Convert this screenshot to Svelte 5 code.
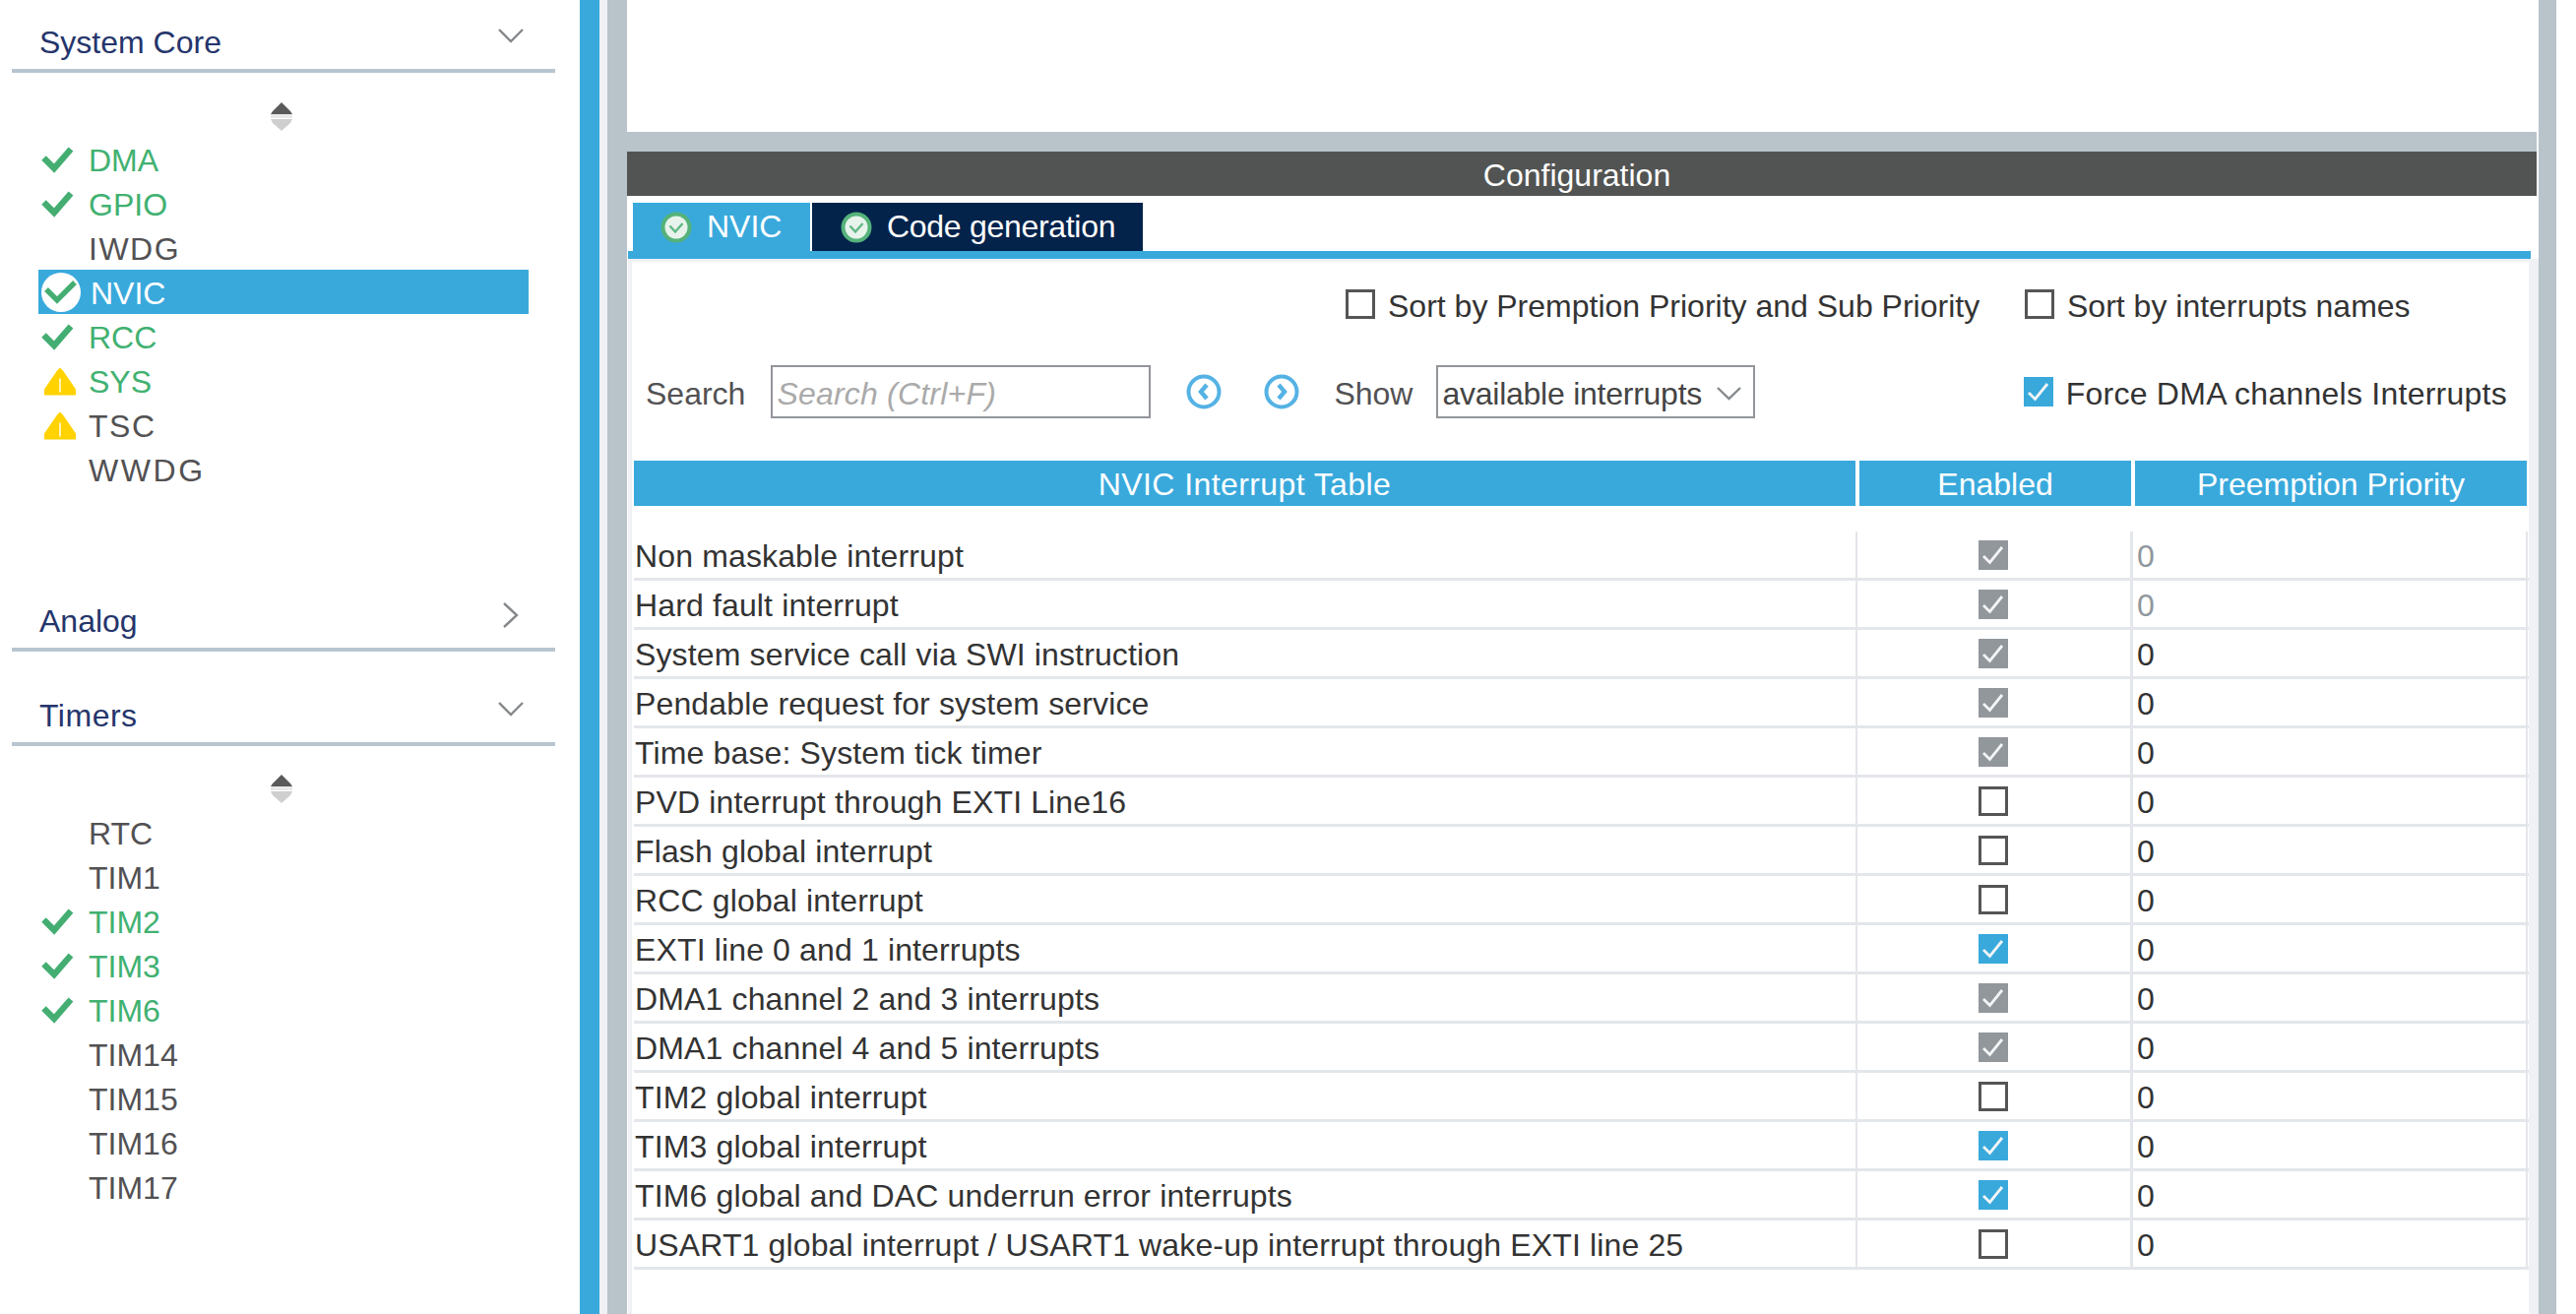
<script>
	const systemCore = [
		{ name: 'DMA', icon: 'check', green: true },
		{ name: 'GPIO', icon: 'check', green: true },
		{ name: 'IWDG', track: 'wide' },
		{ name: 'NVIC', icon: 'active', selected: true },
		{ name: 'RCC', icon: 'check', green: true },
		{ name: 'SYS', icon: 'warn', green: true },
		{ name: 'TSC', icon: 'warn', track: 'wide' },
		{ name: 'WWDG', track: 'wider' }
	];
	const timers = [
		{ name: 'RTC' },
		{ name: 'TIM1' },
		{ name: 'TIM2', icon: 'check', green: true },
		{ name: 'TIM3', icon: 'check', green: true },
		{ name: 'TIM6', icon: 'check', green: true },
		{ name: 'TIM14' },
		{ name: 'TIM15' },
		{ name: 'TIM16' },
		{ name: 'TIM17' }
	];
	// state: off | on | locked
	const interrupts = [
		{ name: 'Non maskable interrupt', state: 'locked', dim: true },
		{ name: 'Hard fault interrupt', state: 'locked', dim: true },
		{ name: 'System service call via SWI instruction', state: 'locked' },
		{ name: 'Pendable request for system service', state: 'locked' },
		{ name: 'Time base: System tick timer', state: 'locked' },
		{ name: 'PVD interrupt through EXTI Line16', state: 'off' },
		{ name: 'Flash global interrupt', state: 'off' },
		{ name: 'RCC global interrupt', state: 'off' },
		{ name: 'EXTI line 0 and 1 interrupts', state: 'on' },
		{ name: 'DMA1 channel 2 and 3 interrupts', state: 'locked' },
		{ name: 'DMA1 channel 4 and 5 interrupts', state: 'locked' },
		{ name: 'TIM2 global interrupt', state: 'off' },
		{ name: 'TIM3 global interrupt', state: 'on' },
		{ name: 'TIM6 global and DAC underrun error interrupts', state: 'on' },
		{ name: 'USART1 global interrupt / USART1 wake-up interrupt through EXTI line 25', state: 'off' }
	];
</script>

{#snippet scroller()}
	<svg class="scroller" width="22" height="29" viewBox="0 0 22 29">
		<path d="M11 0 L20 9 L22 12 L0 12 L2 9 Z" fill="#5a5a5a" />
		<rect x="0" y="12" width="22" height="4" fill="#e9e9e9" />
		<path d="M0 17 L22 17 L20 21 L11 29 L2 21 Z" fill="#cfcfcf" />
	</svg>
{/snippet}

{#snippet box(state)}
	<span class="box {state}">
		{#if state !== 'off'}
			<svg width="30" height="30" viewBox="0 0 30 30">
				<path d="M5 16 L11.5 22.5 L24 7" fill="none" stroke="#f4f5f6" stroke-width="2.8" />
			</svg>
		{/if}
	</span>
{/snippet}

{#snippet navList(items)}
	<ul class="nav-list">
		{#each items as item}
			<li class="nav-row {item.track ?? ''}" class:green={item.green} class:selected={item.selected}>
				<span class="slot">
					{#if item.icon === 'check'}
						<svg width="34" height="28" viewBox="0 0 34 28">
							<path d="M3.5 12.5 L14 23 L31 3.5" fill="none" stroke="#44ae72" stroke-width="6.4" />
						</svg>
					{:else if item.icon === 'active'}
						<svg width="44" height="44" viewBox="0 0 44 44">
							<circle cx="22" cy="22" r="20" fill="#fff" />
							<path d="M7 19 L18 30 L36 12" fill="none" stroke="#44ae72" stroke-width="5.4" />
						</svg>
					{:else if item.icon === 'warn'}
						<svg width="36" height="31" viewBox="-3 -1.5 36 31">
							<path d="M17 1 L20 4 L33 23 L33 29 L1 29 L1 23 L14 4 Z" fill="#ffd200" />
							<rect x="16" y="12" width="2" height="14" fill="#fff3b8" />
						</svg>
					{/if}
				</span>
				<span class="nav-name">{item.name}</span>
			</li>
		{/each}
	</ul>
{/snippet}

{#snippet tabIcon()}
	<svg width="32" height="32" viewBox="0 0 32 32">
		<circle cx="16" cy="16" r="13.5" fill="#e8f3ec" stroke="#55b27a" stroke-width="4" />
		<path d="M9.5 14.5 L15 20.5 L22.5 12" fill="none" stroke="#62b885" stroke-width="2.4" />
	</svg>
{/snippet}

<div class="page">
	<aside class="sidebar">
		<section class="group first">
			<header class="group-head">
				<span>System Core</span>
				<svg class="chev" width="26" height="15" viewBox="0 0 26 15"><path d="M1 1 L13 13 L25 1" fill="none" stroke="#85898c" stroke-width="2.4" /></svg>
			</header>
			<div class="scroll-wrap first-scroll">{@render scroller()}</div>
			{@render navList(systemCore)}
		</section>
		<section class="group analog">
			<header class="group-head">
				<span>Analog</span>
				<svg class="chev right" width="16" height="26" viewBox="0 0 16 26"><path d="M1 1 L14 13 L1 25" fill="none" stroke="#85898c" stroke-width="2.4" /></svg>
			</header>
		</section>
		<section class="group timers">
			<header class="group-head">
				<span class="timers-name">Timers</span>
				<svg class="chev" width="26" height="15" viewBox="0 0 26 15"><path d="M1 1 L13 13 L25 1" fill="none" stroke="#85898c" stroke-width="2.4" /></svg>
			</header>
			<div class="scroll-wrap">{@render scroller()}</div>
			{@render navList(timers)}
		</section>
	</aside>
	<div class="stripe"></div>
	<div class="pale"></div>
	<div class="gutter"></div>

	<main class="panel">
		<div class="band"></div>
		<div class="title-bar"><span>Configuration</span></div>
		<nav class="tabs">
			<div class="tab current">{@render tabIcon()}<span>NVIC</span></div>
			<div class="tab navy">{@render tabIcon()}<span>Code generation</span></div>
		</nav>
		<div class="tab-rule"></div>
		<div class="body">
			<div class="sort-row">
				<label class="opt">{@render box('off')}<span>Sort by Premption Priority and Sub Priority</span></label>
				<label class="opt">{@render box('off')}<span>Sort by interrupts names</span></label>
			</div>
			<div class="search-row">
				<span class="field-label">Search</span>
				<input class="search" placeholder="Search (Ctrl+F)" />
				<svg class="round first-round" width="36" height="36" viewBox="0 0 36 36">
					<circle cx="18" cy="18" r="15.5" fill="none" stroke="#55b2e4" stroke-width="4" />
					<path d="M21 11 L15 18 L21 25" fill="none" stroke="#55b2e4" stroke-width="4.4" />
				</svg>
				<svg class="round" width="36" height="36" viewBox="0 0 36 36">
					<circle cx="18" cy="18" r="15.5" fill="none" stroke="#55b2e4" stroke-width="4" />
					<path d="M15 11 L21 18 L15 25" fill="none" stroke="#55b2e4" stroke-width="4.4" />
				</svg>
				<span class="field-label show">Show</span>
				<div class="select">
					<span>available interrupts</span>
					<svg width="25" height="14" viewBox="0 0 25 14"><path d="M1 1 L12.5 12 L24 1" fill="none" stroke="#85898c" stroke-width="2.4" /></svg>
				</div>
				<label class="opt force">{@render box('on')}<span>Force DMA channels Interrupts</span></label>
			</div>

			<div class="thead">
				<div class="thead-name">NVIC Interrupt Table</div>
				<div>Enabled</div>
				<div>Preemption Priority</div>
			</div>
			<div class="tbody">
				{#each interrupts as row}
					<div class="row">
						<div class="cell name">{row.name}</div>
						<div class="cell enabled">{@render box(row.state)}</div>
						<div class="cell prio" class:dim={row.dim}>0</div>
					</div>
				{/each}
			</div>
		</div>
	</main>
	<div class="gutter right"></div>
</div>

<style>
	:global(body) {
		margin: 0;
		background: #fff;
	}
	.page {
		display: flex;
		width: 2617px;
		height: 1335px;
		overflow: hidden;
		font-family: 'Liberation Sans', Arial, sans-serif;
		font-size: 32px;
		color: #333;
	}
	.sidebar {
		flex: 0 0 589px;
	}
	.stripe {
		flex: 0 0 20px;
		background: #39a9dc;
	}
	.pale {
		flex: 0 0 8px;
		background: #eff1f4;
	}
	.gutter {
		flex: 0 0 20px;
		background: #b8c3ca;
	}
	.gutter.right {
		flex-basis: 18px;
	}

	/* sidebar */
	.group {
		margin: 0 25px 0 12px;
	}
	.group-head {
		display: flex;
		justify-content: space-between;
		align-items: flex-start;
		height: 70px;
		padding-left: 28px;
		border-bottom: 4px solid #b8c5d0;
		color: #25356b;
		line-height: 86px;
	}
	.timers-name {
		letter-spacing: 0.5px;
	}
	.chev {
		margin: 29px 32px 0 0;
	}
	.chev.right {
		margin: 24px 37px 0 0;
	}
	.scroll-wrap {
		display: flex;
		justify-content: center;
		margin: 29px 0 7px;
		height: 29px;
		padding-right: 4px;
	}
	.first-scroll {
		margin-top: 30px;
		margin-bottom: 6px;
	}
	.scroller {
		display: block;
	}
	.analog {
		margin-top: 89px;
	}
	.timers {
		margin-top: 22px;
	}
	.nav-list {
		list-style: none;
		margin: 0 0 0 27px;
		padding: 0;
		width: 498px;
	}
	.nav-row {
		display: flex;
		align-items: center;
		height: 45px;
		color: #525153;
	}
	.nav-row.green {
		color: #41b171;
	}
	.nav-row.wide {
		letter-spacing: 1.5px;
	}
	.nav-row.wider {
		letter-spacing: 2.6px;
	}
	.nav-row.selected {
		background: #39a9dc;
		color: #fff;
	}
	.nav-name {
		padding-top: 3px;
	}
	.slot {
		flex: 0 0 51px;
		display: flex;
		align-items: center;
		padding-left: 2px;
		box-sizing: border-box;
	}
	.slot svg {
		flex: none;
		filter: blur(0.5px);
	}
	.nav-row.selected .slot {
		flex-basis: 53px;
		padding-left: 1px;
	}

	/* main panel */
	.panel {
		flex: 0 0 1942px;
		display: flex;
		flex-direction: column;
	}
	.band {
		height: 20px;
		margin: 134px 2px 0 0;
		background: #b8c3ca;
	}
	.title-bar {
		height: 45px;
		margin-right: 2px;
		padding: 4px 10px 0 0;
		background: #525453;
		color: #fff;
		display: flex;
		align-items: center;
		justify-content: center;
		box-sizing: border-box;
	}
	.tabs {
		display: flex;
		gap: 2px;
		margin: 7px 0 0 6px;
		height: 49px;
	}
	.tab {
		display: flex;
		align-items: center;
		color: #fff;
		gap: 15px;
		box-sizing: border-box;
	}
	.tab.current {
		width: 180px;
		background: #39a9dc;
		padding-left: 28px;
	}
	.tab.navy {
		width: 336px;
		background: #03234b;
		padding-left: 29px;
		letter-spacing: -0.3px;
	}
	.tab-rule {
		height: 8px;
		margin: 0 8px 0 1px;
		background: #39a9dc;
	}
	.body {
		flex: 1;
		background: #fff;
		border: solid #eff1f4;
		border-width: 3px 10px 0 4px;
		margin-left: 1px;
		padding: 28px 0 0 2px;
	}
	.opt {
		display: flex;
		align-items: center;
		gap: 13px;
	}
	.opt > span:last-child {
		padding-top: 4px;
	}
	.box {
		flex: 0 0 30px;
		width: 30px;
		height: 30px;
		padding: 0;
		box-sizing: border-box;
		display: block;
	}
	.box svg {
		display: block;
	}
	.box.off {
		border: 3px solid #555;
		background: #fff;
	}
	.box.on {
		background: #39a9dc;
	}
	.box.locked {
		background: #92979c;
	}
	.sort-row {
		display: flex;
		height: 30px;
		padding-left: 723px;
	}
	.sort-row .opt:first-child {
		width: 690px;
	}
	.search-row {
		display: flex;
		align-items: center;
		height: 54px;
		margin-top: 47px;
		padding-left: 12px;
	}
	.field-label {
		color: #525153;
		padding-top: 4px;
	}
	.search {
		width: 386px;
		height: 54px;
		box-sizing: border-box;
		margin-left: 26px;
		padding: 4px 0 0 4px;
		border: 2px solid #929599;
		outline: none;
		font: italic 32px 'Liberation Sans', Arial, sans-serif;
		letter-spacing: 0.2px;
		color: #333;
	}
	.search::placeholder {
		color: #aaaaaa;
		opacity: 1;
	}
	.round {
		margin-left: 43px;
		flex: none;
	}
	.first-round {
		margin-left: 36px;
	}
	.show {
		margin-left: 35px;
	}
	.select {
		display: flex;
		align-items: center;
		justify-content: space-between;
		width: 324px;
		height: 54px;
		box-sizing: border-box;
		margin-left: 24px;
		padding: 4px 12px 0 4px;
		border: 2px solid #929599;
		color: #444;
		letter-spacing: -0.25px;
	}
	.force {
		margin-left: auto;
		margin-right: 22px;
		letter-spacing: 0.25px;
	}
	.thead {
		display: grid;
		grid-template-columns: 1241px 276px 398px;
		gap: 4px;
		height: 46px;
		margin-top: 43px;
		line-height: 43px;
		color: #fff;
		text-align: center;
	}
	.thead > div {
		padding-top: 3px;
		background: #39a9dc;
	}
	.thead-name {
		letter-spacing: 0.4px;
	}
	.tbody {
		margin-top: 26px;
	}
	.row {
		display: grid;
		grid-template-columns: 1243px 280px 401px;
		height: 50px;
		box-sizing: border-box;
		border-bottom: 3px solid #e3e6ea;
	}
	.cell {
		display: flex;
		align-items: center;
		box-sizing: border-box;
		border-right: 3px solid #e3e6ea;
		white-space: nowrap;
	}
	.name {
		padding: 4px 0 0 1px;
		border-right-width: 2px;
		letter-spacing: 0.14px;
	}
	.enabled {
		justify-content: center;
		padding-right: 2px;
	}
	.prio {
		padding: 4px 0 0 4px;
		border-right-width: 2px;
	}
	.prio.dim {
		color: #90979d;
	}
</style>
